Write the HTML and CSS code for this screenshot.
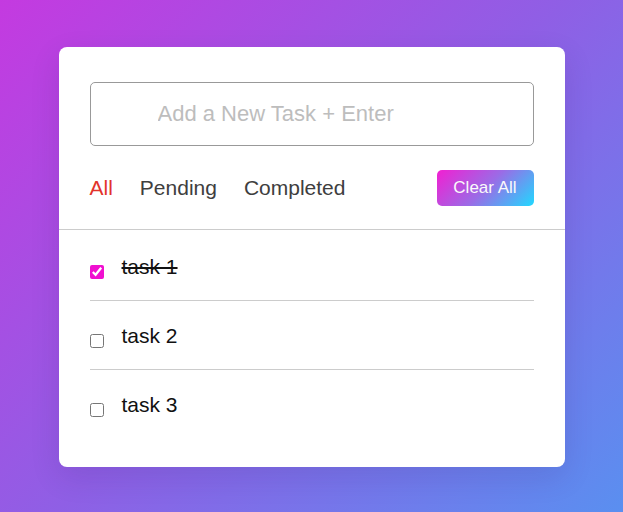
FILE: index.html
```html
<!DOCTYPE html>
<html lang="en">
<head>
<meta charset="utf-8">
<title>Todo</title>
<link rel="stylesheet" href="styles.css">
</head>
<body>
  <div class="card">
    <div class="header">
      <input class="task-input" type="text" placeholder="Add a New Task + Enter">
      <div class="controls">
        <div class="filters">
          <span class="filter active">All</span>
          <span class="filter">Pending</span>
          <span class="filter">Completed</span>
        </div>
        <button class="clear-btn">Clear All</button>
      </div>
    </div>
    <ul class="task-list">
      <li class="task">
        <input class="check" type="checkbox" checked>
        <span class="task-name done">task 1</span>
      </li>
      <li class="task">
        <input class="check" type="checkbox">
        <span class="task-name">task 2</span>
      </li>
      <li class="task">
        <input class="check" type="checkbox">
        <span class="task-name">task 3</span>
      </li>
    </ul>
  </div>
</body>
</html>
```

FILE: styles.css
```css
* { box-sizing: border-box; }

html, body {
  margin: 0;
  height: 100%;
}

body {
  font-family: "Liberation Sans", Arial, sans-serif;
  background: linear-gradient(135deg, #c43ae0 0%, #8f5fe5 50%, #5a8ff0 100%);
  display: flex;
  align-items: center;
  justify-content: center;
  padding-top: 2px;
}

.card {
  width: 506px;
  background: #fff;
  border-radius: 8px;
  box-shadow: 0 10px 30px rgba(40, 20, 90, 0.12);
}

.header {
  padding: 35px 31px 23px;
  border-bottom: 1px solid #ccc;
}

.task-input {
  display: block;
  width: 100%;
  height: 64px;
  border: 1px solid #999;
  border-radius: 5px;
  padding: 0 20px 0 67px;
  font-family: inherit;
  font-size: 22px;
  color: #333;
  outline: none;
}

.task-input::placeholder {
  color: #bdbdbd;
}

.controls {
  margin-top: 24px;
  display: flex;
  align-items: center;
  justify-content: space-between;
  height: 36px;
}

.filters {
  display: flex;
  gap: 27px;
}

.filter {
  font-size: 21px;
  line-height: 24px;
  color: #3e3e3e;
}

.filter.active {
  color: #e2332b;
}

.clear-btn {
  width: 97px;
  height: 36px;
  border: none;
  border-radius: 5px;
  background: linear-gradient(135deg, #f21fd2 0%, #9b6be6 50%, #20d9ff 100%);
  color: #fafafa;
  font-family: inherit;
  font-size: 17px;
  padding: 0;
}

.task-list {
  list-style: none;
  margin: 0;
  padding: 2px 31px 29px;
}

.task {
  display: flex;
  align-items: flex-start;
  padding: 23px 0 21px;
  border-bottom: 1px solid #ccc;
}

.task:last-child {
  border-bottom: none;
}

.check {
  width: 14px;
  height: 14px;
  margin: 10px 0 0 0;
  accent-color: #f010d0;
}

.task-name {
  margin-left: 18px;
  font-size: 21px;
  line-height: 24px;
  color: #111;
}

.task-name.done {
  text-decoration: line-through;
}
```
